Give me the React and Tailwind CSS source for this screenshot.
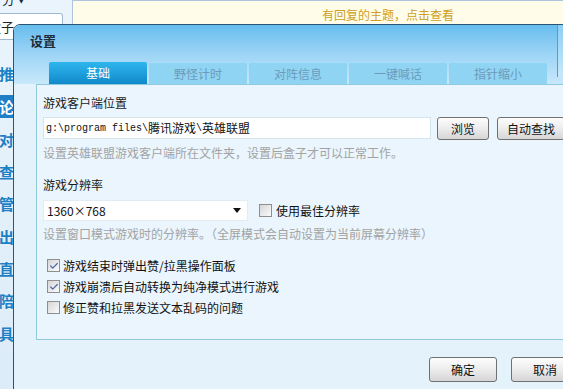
import { Check } from 'lucide-react';

const font = "font-['Noto_Sans_CJK_SC','Noto_Sans',sans-serif]";

const sideItems = [
  { t: '推', y: 'mt-[22px]' },
  { t: '论', y: 'mt-[10px]', on: true },
  { t: '对', y: 'mt-[10px]' },
  { t: '查', y: 'mt-[9px]' },
  { t: '管', y: 'mt-[9px]' },
  { t: '出', y: 'mt-[10px]' },
  { t: '直', y: 'mt-[9px]' },
  { t: '陪', y: 'mt-[9px]' },
  { t: '具', y: 'mt-[10px]' },
];

const tabs = ['基础', '野怪计时', '对阵信息', '一键喊话', '指针缩小'];

function Box({ checked }) {
  return (
    <div className="w-[13px] h-[13px] shrink-0 border border-[#8f8f8f] bg-linear-to-br from-[#d6d6d6] to-[#fbfbfb] flex items-center justify-center">
      {checked && <Check size={10} strokeWidth={3} className="text-[#5068a6]" />}
    </div>
  );
}

function Btn({ children, w }) {
  return (
    <button className={`${w} shrink-0 rounded-[3px] border border-[#707070] bg-linear-to-b from-[#fdfdfd] via-[#ececec] to-[#d6d6d6] text-[12px] text-[#111] leading-none flex items-center justify-center`}>
      {children}
    </button>
  );
}

export default function App() {
  return (
    <div className={`${font} relative w-[563px] h-[389px] overflow-hidden bg-[#e4f1fb] text-[12px]`}>
      {/* page behind the dialog */}
      <div className="flex h-full">
        <div className="w-[73px] shrink-0 border-r border-[#a9c6dc] bg-linear-to-b from-[#eaf4fc] to-[#dcecf8] flex flex-col">
          <div className="-mt-[9px] pl-[2px] text-[13px] leading-[16px] text-[#1b2b3b]">分 ▾</div>
          <div className="mt-[6px] h-[27px] w-[63px] rounded-r-[3px] border border-l-0 border-[#9eb9d0] bg-white text-[13px] leading-[25px] text-[#222] -indent-[12px]">盒子</div>
          {sideItems.map((s) => (
            <div
              key={s.t}
              className={`${s.y} h-[23px] w-[16px] text-[15px] leading-[23px] font-bold ${s.on ? 'bg-[#1f7fc6] text-white' : 'text-[#1d7fc4]'}`}
            >
              <span className="-ml-[1px]">{s.t}</span>
            </div>
          ))}
        </div>
        <div className="flex-1 flex flex-col">
          <div className="h-[24px] border-t border-[#a9c6dc] bg-[#fffde9] pl-[249px] pt-[6px] text-[12px] leading-[16px] text-[#cf9e1e]">
            有回复的主题，点击查看
          </div>
        </div>
      </div>

      {/* settings dialog */}
      <div className="absolute left-[13px] top-[24px] w-[575px] h-[380px] rounded-tl-[7px] border border-[#2a5673] bg-[#e4f2fc] flex flex-col overflow-hidden">
        <div className="relative bg-linear-to-b from-[#66bdee] via-[#9dd5f6] to-[#c8e8fa]">
          <div className="absolute left-[543px] top-0 h-[52px] w-[20px] border-l border-[#4f9fd2] bg-linear-to-b from-[#8ccff4] to-[#c8e8fa]" />
          <div className="h-[37px] pl-[16px] pt-[8px] text-[13px] leading-[16px] font-bold text-[#1c2c3a]">设置</div>
          <div className="flex gap-[2px] pl-[35px] h-[22px]">
            {tabs.map((t, i) => (
              <div
                key={t}
                className={`w-[98px] rounded-t-[2px] flex items-center justify-center text-[12px] leading-none ${
                  i === 0
                    ? 'bg-linear-to-b from-[#2eb6ee] to-[#1089ca] text-white'
                    : 'bg-[#8fd4f3] text-[#6c9bbb] border-t border-[#a6def7]'
                }`}
              >
                {t}
              </div>
            ))}
          </div>
        </div>

        <div className="ml-[22px] h-[256px] border border-[#91c9dc] bg-[#eaf5fd] pl-[6px] pt-[10px] flex flex-col">
          <div className="leading-[16px] text-[#1a1a1a]">游戏客户端位置</div>
          <div className="mt-[6px] flex h-[23px]">
            <div className="w-[388px] h-[22px] border border-[#d5e5ef] bg-white pl-[2px] flex items-center text-[#111]">
              <span className="font-['Liberation_Mono',monospace] text-[10px]">g:\program files\</span>
              <span className="text-[12px]">腾讯游戏</span>
              <span className="font-['Liberation_Mono',monospace] text-[10px]">\</span>
              <span className="text-[12px]">英雄联盟</span>
            </div>
            <div className="ml-[6px] flex gap-[8px]">
              <Btn w="w-[52px] h-[23px]">浏览</Btn>
              <Btn w="w-[68px] h-[23px]">自动查找</Btn>
            </div>
          </div>
          <div className="mt-[5px] leading-[16px] text-[#a3a3a3]">设置英雄联盟游戏客户端所在文件夹，设置后盒子才可以正常工作。</div>

          <div className="mt-[16px] leading-[16px] text-[#1a1a1a]">游戏分辨率</div>
          <div className="mt-[7px] flex items-center">
            <div className="w-[205px] h-[21px] bg-white border border-[#e1ecf3] pl-[3px] pr-[6px] flex items-center justify-between text-[#111]">
              <span className="text-[12px]">1360×768</span>
              <svg width="8" height="5" viewBox="0 0 8 5">
                <polygon points="0,0 8,0 4,5" fill="#111" />
              </svg>
            </div>
            <div className="ml-[11px] flex items-center gap-[4px]">
              <Box />
              <span className="leading-[16px] text-[#111]">使用最佳分辨率</span>
            </div>
          </div>
          <div className="mt-[5px] leading-[16px] text-[#a3a3a3]">设置窗口模式游戏时的分辨率。（全屏模式会自动设置为当前屏幕分辨率）</div>

          <div className="mt-[15px] pl-[4px] flex flex-col gap-[4px]">
            <div className="flex items-center gap-[3px] h-[17px]">
              <Box checked />
              <span className="leading-[16px] text-[#111]">游戏结束时弹出赞/拉黑操作面板</span>
            </div>
            <div className="flex items-center gap-[3px] h-[17px]">
              <Box checked />
              <span className="leading-[16px] text-[#111]">游戏崩溃后自动转换为纯净模式进行游戏</span>
            </div>
            <div className="flex items-center gap-[3px] h-[17px]">
              <Box />
              <span className="leading-[16px] text-[#111]">修正赞和拉黑发送文本乱码的问题</span>
            </div>
          </div>
        </div>

        <div className="mt-[17px] pl-[415px] flex gap-[14px]">
          <Btn w="w-[68px] h-[25px]">确定</Btn>
          <Btn w="w-[68px] h-[25px]">取消</Btn>
        </div>
      </div>
    </div>
  );
}
